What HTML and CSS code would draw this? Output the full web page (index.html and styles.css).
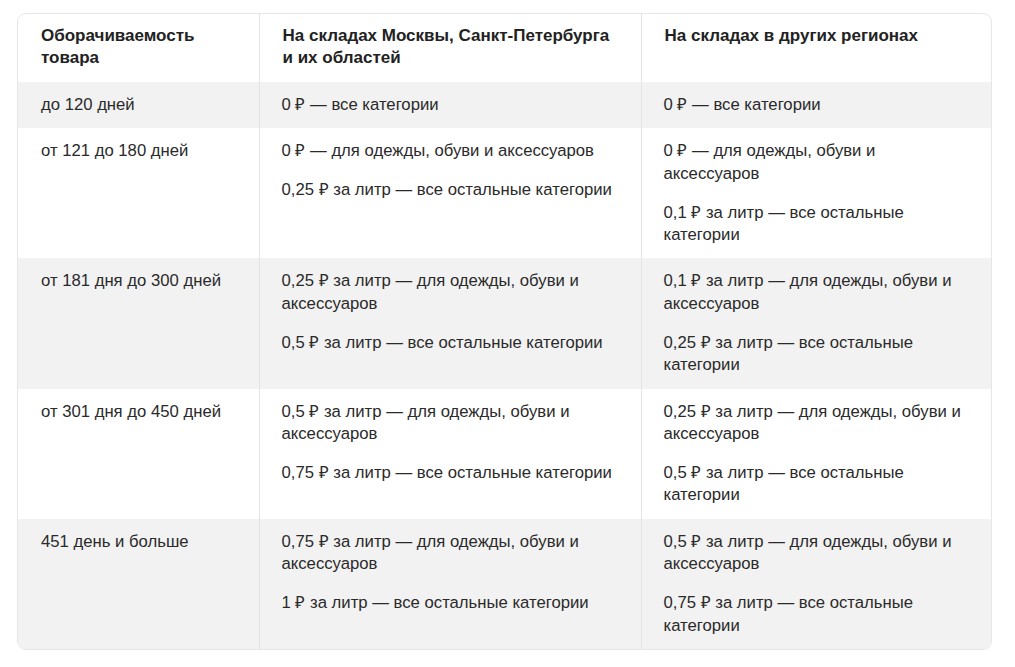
FILE: index.html
```html
<!DOCTYPE html>
<html lang="ru">
<head>
<meta charset="utf-8">
<link rel="stylesheet" href="styles.css">
</head>
<body>
<div class="wrap">
<table class="tbl">
  <colgroup>
    <col class="c1"><col class="c2"><col class="c3">
  </colgroup>
  <thead>
    <tr>
      <th>Оборачиваемость товара</th>
      <th>На складах Москвы, Санкт-Петербурга и их областей</th>
      <th>На складах в других регионах</th>
    </tr>
  </thead>
  <tbody>
    <tr class="alt">
      <td><p>до 120 дней</p></td>
      <td><p>0 ₽ — все категории</p></td>
      <td><p>0 ₽ — все категории</p></td>
    </tr>
    <tr>
      <td><p>от 121 до 180 дней</p></td>
      <td><p>0 ₽ — для одежды, обуви и аксессуаров</p><p>0,25 ₽ за литр — все остальные категории</p></td>
      <td><p>0 ₽ — для одежды, обуви и аксессуаров</p><p>0,1 ₽ за литр — все остальные категории</p></td>
    </tr>
    <tr class="alt">
      <td><p>от 181 дня до 300 дней</p></td>
      <td><p>0,25 ₽ за литр — для одежды, обуви и аксессуаров</p><p>0,5 ₽ за литр — все остальные категории</p></td>
      <td><p>0,1 ₽ за литр — для одежды, обуви и аксессуаров</p><p>0,25 ₽ за литр — все остальные категории</p></td>
    </tr>
    <tr>
      <td><p>от 301 дня до 450 дней</p></td>
      <td><p>0,5 ₽ за литр — для одежды, обуви и аксессуаров</p><p>0,75 ₽ за литр — все остальные категории</p></td>
      <td><p>0,25 ₽ за литр — для одежды, обуви и аксессуаров</p><p>0,5 ₽ за литр — все остальные категории</p></td>
    </tr>
    <tr class="alt">
      <td><p>451 день и больше</p></td>
      <td><p>0,75 ₽ за литр — для одежды, обуви и аксессуаров</p><p>1 ₽ за литр — все остальные категории</p></td>
      <td><p>0,5 ₽ за литр — для одежды, обуви и аксессуаров</p><p>0,75 ₽ за литр — все остальные категории</p></td>
    </tr>
  </tbody>
</table>
</div>
</body>
</html>
```

FILE: styles.css
```css
html, body {
  margin: 0;
  padding: 0;
  background: #ffffff;
}

body {
  font-family: "Liberation Sans", Arial, sans-serif;
  font-size: 16.7px;
  line-height: 22.4px;
  color: #2a2a2a;
}

.wrap {
  width: 973px;
  margin: 13px 0 0 17px;
  border: 1px solid #e6e6e6;
  border-radius: 9px;
  overflow: hidden;
}

.tbl {
  width: 100%;
  border-collapse: collapse;
  table-layout: fixed;
}

.c1 { width: 241px; }
.c2 { width: 382px; }
.c3 { width: auto; }

.tbl th,
.tbl td {
  text-align: left;
  vertical-align: top;
  padding: 12px 22px;
  border-left: 1px solid #e4e4e4;
}

.tbl th:first-child,
.tbl td:first-child {
  border-left: none;
}

.tbl th {
  font-weight: bold;
  font-size: 17px;
  color: #222222;
  padding: 11px 22px 12px 23px;
}

.tbl td:first-child {
  padding-left: 23px;
}

.tbl p {
  margin: 0;
}

.tbl p + p {
  margin-top: 16.6px;
}

.alt {
  background: #f2f2f2;
}
```
